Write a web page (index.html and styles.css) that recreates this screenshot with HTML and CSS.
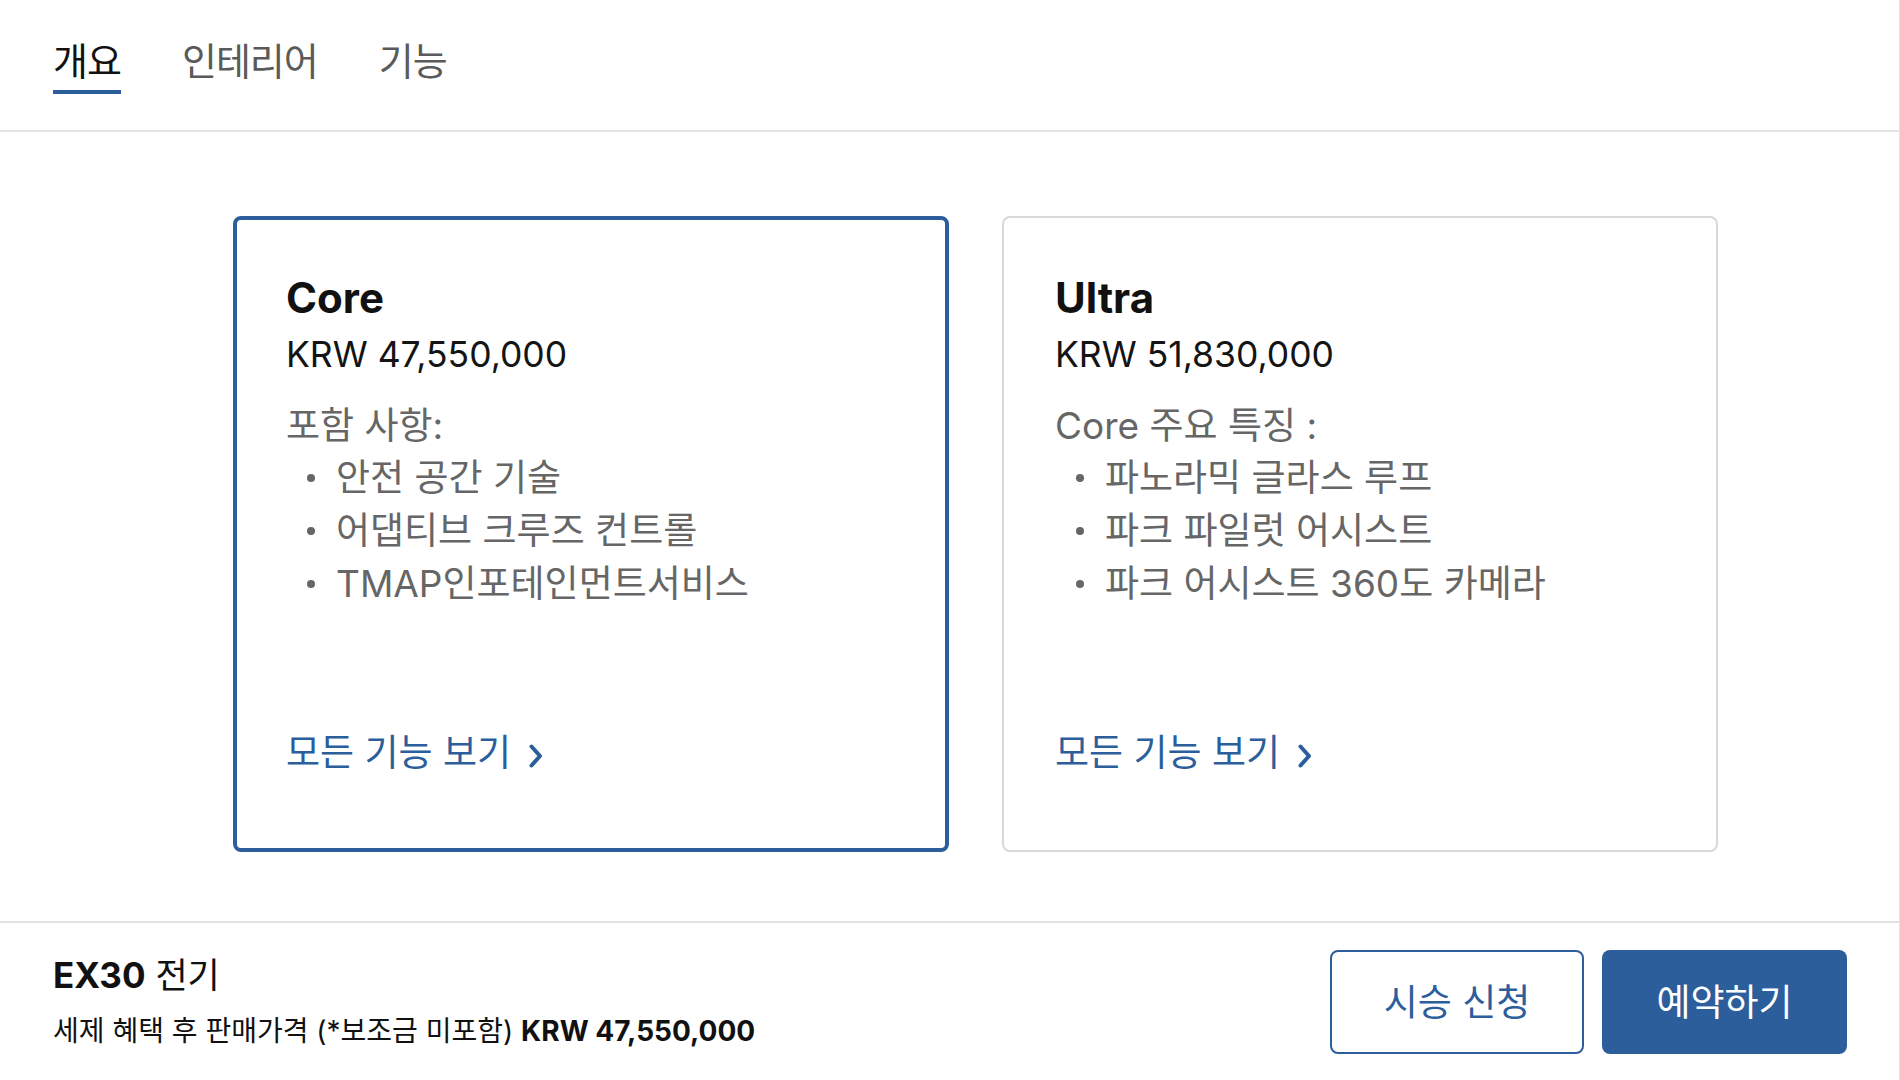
FILE: index.html
```html
<!DOCTYPE html>
<html lang="ko">
<head>
<meta charset="utf-8">
<title>EX30</title>
<link rel="stylesheet" href="styles.css">
</head>
<body>
<div class="page">
  <nav class="tabs">
    <a class="tab active">개요</a>
    <a class="tab">인테리어</a>
    <a class="tab">기능</a>
  </nav>
  <main class="main">
    <section class="card selected">
      <h2 class="card-title">Core</h2>
      <p class="price">KRW 47,550,000</p>
      <p class="label">포함 사항:</p>
      <ul class="features">
        <li><span class="dot"></span>안전 공간 기술</li>
        <li><span class="dot"></span>어댑티브 크루즈 컨트롤</li>
        <li><span class="dot"></span>TMAP인포테인먼트서비스</li>
      </ul>
      <a class="more">모든 기능 보기<svg class="chev" width="16" height="26" viewBox="0 0 16 26"><path d="M3.5 3.5 L12 13 L3.5 22.5" fill="none" stroke="currentColor" stroke-width="4" stroke-linecap="round" stroke-linejoin="round"/></svg></a>
    </section>
    <section class="card">
      <h2 class="card-title">Ultra</h2>
      <p class="price">KRW 51,830,000</p>
      <p class="label">Core 주요 특징 :</p>
      <ul class="features">
        <li><span class="dot"></span>파노라믹 글라스 루프</li>
        <li><span class="dot"></span>파크 파일럿 어시스트</li>
        <li><span class="dot"></span>파크 어시스트 360도 카메라</li>
      </ul>
      <a class="more">모든 기능 보기<svg class="chev" width="16" height="26" viewBox="0 0 16 26"><path d="M3.5 3.5 L12 13 L3.5 22.5" fill="none" stroke="currentColor" stroke-width="4" stroke-linecap="round" stroke-linejoin="round"/></svg></a>
    </section>
  </main>
  <footer class="bar">
    <div class="summary">
      <div class="model"><b>EX30</b> 전기</div>
      <div class="sale">세제 혜택 후 판매가격 (*보조금 미포함) <b>KRW 47,550,000</b></div>
    </div>
    <div class="actions">
      <a class="btn btn-outline">시승 신청</a>
      <a class="btn btn-primary">예약하기</a>
    </div>
  </footer>
</div>
</body>
</html>
```

FILE: styles.css
```css
html, body {
  margin: 0;
  padding: 0;
  background: #ffffff;
}

body {
  font-family: "Inter", "Noto Sans CJK KR", sans-serif;
  color: #141414;
}

.page {
  width: 1899px;
  height: 1080px;
  border-right: 1px solid #e4e4e4;
  display: flex;
  flex-direction: column;
  overflow: hidden;
}

/* Tabs */
.tabs {
  flex-shrink: 0;
  height: 130px;
  border-bottom: 2px solid #e3e3e3;
  display: flex;
  align-items: flex-start;
  gap: 61px;
  padding: 0 53px;
}

.tab {
  font-size: 38px;
  line-height: 46px;
  letter-spacing: -1px;
  padding-top: 38px;
  padding-bottom: 6px;
  border-bottom: 4px solid transparent;
  color: #5a5a5a;
  cursor: pointer;
}

.tab.active {
  color: #111111;
  border-bottom-color: #2c5e9b;
}

/* Cards */
.main {
  flex: 1;
  display: flex;
  align-items: flex-start;
  gap: 53px;
  padding: 84px 0 0 233px;
}

.card {
  width: 716px;
  height: 636px;
  box-sizing: border-box;
  border: 2px solid #d9d9d9;
  border-radius: 8px;
  padding: 55px 51px 0;
  display: flex;
  flex-direction: column;
}

.card.selected {
  border: 4px solid #2c5e9b;
  padding: 53px 49px 0;
}

.card-title {
  margin: 0;
  font-size: 42px;
  line-height: 50px;
  font-weight: 700;
  color: #111111;
}

.price {
  margin: 10px 0 0;
  font-size: 35.5px;
  line-height: 44px;
  color: #141414;
}

.label {
  margin: 24px 0 0;
  font-size: 37px;
  line-height: 50px;
  color: #666666;
}

.features {
  list-style: none;
  margin: 0;
  padding: 0 0 0 21px;
}

.features li {
  display: flex;
  align-items: center;
  font-size: 37px;
  line-height: 53px;
  color: #666666;
}

.dot {
  width: 8px;
  height: 8px;
  border-radius: 50%;
  background: #666666;
  margin-right: 21px;
  flex-shrink: 0;
}

.more {
  margin-top: 119px;
  display: flex;
  align-items: center;
  gap: 17px;
  font-size: 37px;
  line-height: 48px;
  color: #2c5e9b;
  cursor: pointer;
}

.chev {
  display: block;
  margin-top: 5px;
}

/* Footer bar */
.bar {
  flex-shrink: 0;
  height: 157px;
  border-top: 2px solid #e3e3e3;
  display: flex;
  align-items: center;
  justify-content: space-between;
  padding: 0 52px 0 53px;
}

.summary {
  display: flex;
  flex-direction: column;
  gap: 18px;
}

.model {
  font-size: 35px;
  line-height: 40px;
  color: #111111;
}

.model b {
  font-weight: 700;
}

.sale {
  font-size: 28px;
  line-height: 36px;
  color: #111111;
}

.sale b {
  font-weight: 700;
}

.actions {
  display: flex;
  gap: 18px;
}

.btn {
  height: 104px;
  box-sizing: border-box;
  border-radius: 8px;
  display: flex;
  align-items: center;
  justify-content: center;
  font-size: 37px;
  padding-bottom: 3px;
  cursor: pointer;
}

.btn-outline {
  width: 254px;
  border: 2px solid #2c5e9b;
  color: #2c5e9b;
  background: #ffffff;
}

.btn-primary {
  width: 245px;
  background: #2c5e9b;
  color: #ffffff;
}
```
